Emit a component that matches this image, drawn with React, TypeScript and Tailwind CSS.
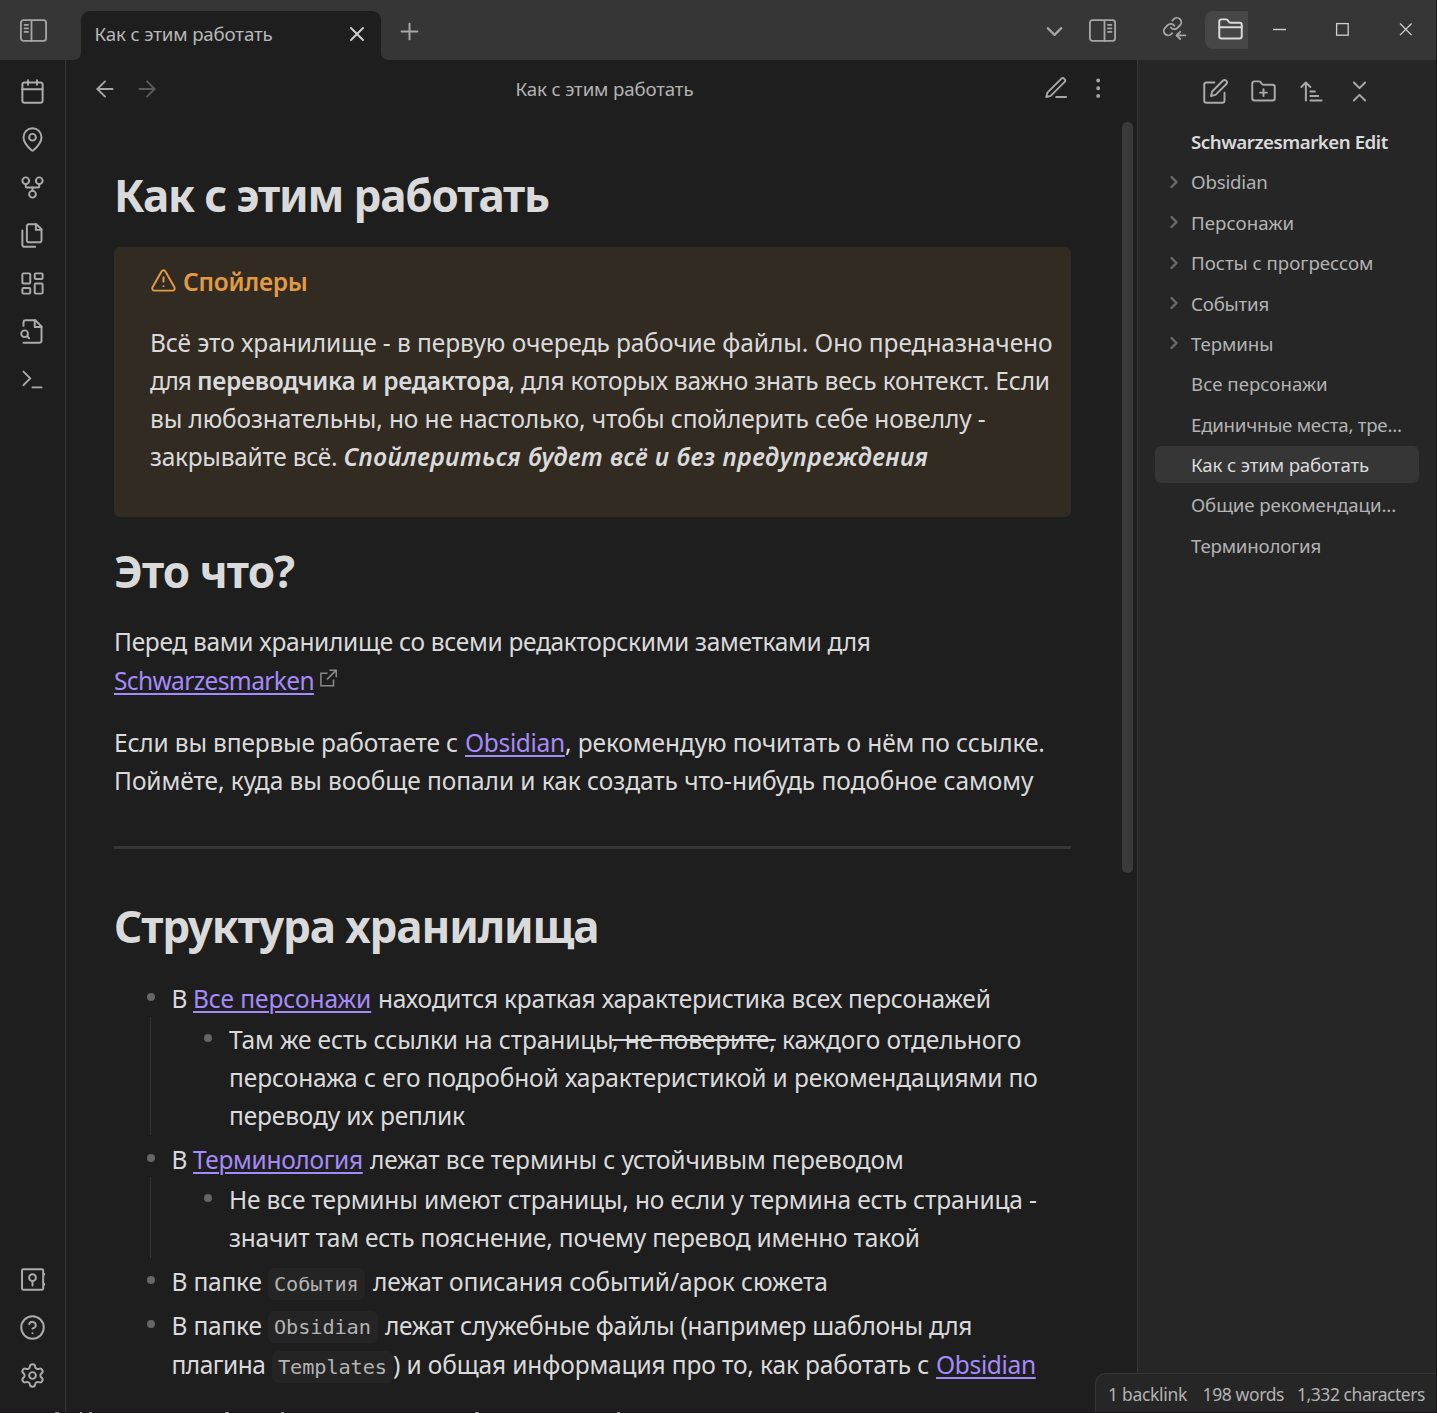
import React from "react";
import {
  ArrowLeft,
  ArrowRight,
  Calendar,
  ChevronDown,
  ChevronRight,
  CircleHelp,
  FolderClosed,
  FolderPlus,
  GitFork,
  LayoutDashboard,
  MapPin,
  Plus,
  Settings,
  X,
} from "lucide-react";

type Kids = { children: React.ReactNode };

function Glyph({ children, className = "size-[27px]" }: Kids & { className?: string }) {
  return (
    <svg
      viewBox="0 0 24 24"
      fill="none"
      stroke="currentColor"
      strokeWidth={1.75}
      strokeLinecap="round"
      strokeLinejoin="round"
      className={className}
    >
      {children}
    </svg>
  );
}

const FilesIcon = () => (
  <Glyph>
    <path d="M15.5 2H8.6c-.4 0-.8.2-1.1.5-.3.3-.5.7-.5 1.1v12.8c0 .4.2.8.5 1.1.3.3.7.5 1.1.5h9.8c.4 0 .8-.2 1.1-.5.3-.3.5-.7.5-1.1V6.5L15.5 2z" />
    <path d="M3 7.6v12.8c0 .4.2.8.5 1.1.3.3.7.5 1.1.5h9.8" />
    <path d="M15 2v5h5" />
  </Glyph>
);

const FileSearchIcon = () => (
  <Glyph>
    <path d="M4 22h14a2 2 0 0 0 2-2V7.5L14.5 2H6a2 2 0 0 0-2 2v3" />
    <path d="M14 2v6h6" />
    <path d="M5 17a3 3 0 1 0 0-6 3 3 0 0 0 0 6z" />
    <path d="m9 18-1.5-1.5" />
  </Glyph>
);

const TerminalIcon = () => (
  <Glyph>
    <path d="m4 17 6-6-6-6" />
    <path d="M12 19h8" />
  </Glyph>
);

const VaultIcon = () => (
  <Glyph>
    <rect x="2.7" y="2.8" width="18.8" height="18.4" rx="1.2" />
    <circle cx="12" cy="10.4" r="3" />
    <path d="M12 13.4v4" />
    <path d="M22.4 7v.6M22.4 16v.6" />
  </Glyph>
);

const LinksInIcon = () => (
  <svg
    viewBox="0 0 25 25"
    fill="none"
    stroke="currentColor"
    strokeWidth={1.9}
    strokeLinecap="round"
    strokeLinejoin="round"
    className="size-[25px]"
  >
    <path
      transform="scale(.88)"
      strokeWidth={2.1}
      d="M10 13a5 5 0 0 0 7.54.54l3-3a5 5 0 0 0-7.07-7.07l-1.72 1.71M14 11a5 5 0 0 0-7.54-.54l-3 3a5 5 0 0 0 7.07 7.07l1-1"
    />
    <path d="M23.3 19.4h-8.6M18.2 15.8l-3.7 3.6 3.7 3.6" />
  </svg>
);

function SidebarToggle({ side }: { side: "left" | "right" }) {
  const left = side === "left";
  return (
    <svg
      viewBox="0 0 28 24"
      fill="none"
      stroke="currentColor"
      strokeWidth={1.8}
      strokeLinecap="round"
      className="h-6 w-7"
    >
      <rect x="0.9" y="1.2" width="25.2" height="20.6" rx="2.6" />
      <path d={left ? "M11.500 2v20" : "M15.500 2v20"} />
      <path
        strokeWidth={1.8}
        d={left ? "M4.600 5.9h3.400M4.600 9.400h3.400M4.600 12.9h3.400" : "M19 5.9h3.400M19 9.400h3.400M19 12.9h3.400"}
      />
    </svg>
  );
}

function ExternalIcon() {
  return (
    <svg viewBox="0 0 18 18" fill="none" stroke="#8a8a8a" strokeWidth={1.5} className="mt-[7px] ml-[5px] size-[18px]">
      <path d="M8.5 4.2H1.9v12.600h12.6v-6.4M8 10.4l9-9M10.4 1.3h6.9v6.9" />
    </svg>
  );
}

function Slot({ children, className = "" }: Kids & { className?: string }) {
  return <div className={"flex h-12 shrink-0 items-center justify-center " + className}>{children}</div>;
}

function TitleBar() {
  return (
    <header className="flex h-[60px] shrink-0 bg-[#363636] text-[#a6a6a6]">
      <div className="flex w-[81px] pt-[19px] pl-[20px]">
        <SidebarToggle side="left" />
      </div>
      <div className="relative mt-[11px] flex w-[300px] items-center rounded-t-[9px] bg-[#1e1e1e] pb-[3px] pl-[13.5px] text-[#b8b8b8]">
        <span className="w-[250.5px] text-[18.7px] tracking-[-0.15px]">Как с этим работать</span>
        <X className="size-6 text-[#cfcfcf]" strokeWidth={1.9} />
        <span className="absolute bottom-0 -left-2 size-2 overflow-hidden">
          <span className="block size-2 rounded-br-[7px] shadow-[0_0_0_8px_#1e1e1e]" />
        </span>
        <span className="absolute -right-2 bottom-0 size-2 overflow-hidden">
          <span className="block size-2 rounded-bl-[7px] shadow-[0_0_0_8px_#1e1e1e]" />
        </span>
      </div>
      <div className="flex w-[57px] items-center justify-center pt-[3px] text-[#a6a6a6]">
        <Plus className="size-[27px]" strokeWidth={1.75} />
      </div>
      <div className="ml-auto flex w-[395px]">
        <div className="flex w-[27px] items-center pt-[3px]">
          <ChevronDown className="size-[27px] shrink-0" strokeWidth={1.9} />
        </div>
        <div className="ml-[21px] w-[27px] pt-[19px]">
          <SidebarToggle side="right" />
        </div>
        <div className="ml-[46px] w-[25px] pt-[16px]">
          <LinksInIcon />
        </div>
        <div className="mt-[11px] ml-[18px] flex h-[38px] w-[43px] items-center rounded-l-[8px] bg-[#464646] pb-px pl-[12px] text-[#dadada]">
          <FolderClosed className="size-[27px] shrink-0" strokeWidth={1.75} />
        </div>
        <div className="flex h-[59px] flex-1 items-center text-[#d0d0d0]">
          <svg viewBox="0 0 188 14" fill="none" stroke="currentColor" strokeWidth={1.3} className="-mt-px h-[14px] w-[188px] shrink-0">
            <path d="M25 7.5h13" strokeWidth={1.4} />
            <rect x="88.6" y="1.6" width="11.6" height="11.6" />
            <path d="m152 1.5 11.6 11.6M163.600 1.500 152 13.100" />
          </svg>
        </div>
      </div>
    </header>
  );
}

function Ribbon() {
  return (
    <nav className="flex w-[66px] shrink-0 flex-col border-r border-[#363636] pt-[7.500px] pb-[12.500px] text-[#ababab]">
      <Slot>
        <Calendar className="size-[27px]" strokeWidth={1.75} />
      </Slot>
      <Slot>
        <MapPin className="size-[27px]" strokeWidth={1.75} />
      </Slot>
      <Slot>
        <GitFork className="size-[27px]" strokeWidth={1.75} />
      </Slot>
      <Slot>
        <FilesIcon />
      </Slot>
      <Slot>
        <LayoutDashboard className="size-[27px]" strokeWidth={1.75} />
      </Slot>
      <Slot>
        <FileSearchIcon />
      </Slot>
      <Slot>
        <TerminalIcon />
      </Slot>
      <Slot className="mt-auto">
        <VaultIcon />
      </Slot>
      <Slot>
        <CircleHelp className="size-[27px]" strokeWidth={1.75} />
      </Slot>
      <Slot>
        <Settings className="size-[27px]" strokeWidth={1.75} />
      </Slot>
    </nav>
  );
}

function ViewHeader() {
  return (
    <div className="flex h-[57px] shrink-0 items-center pl-[26px] text-[#a6a6a6]">
      <ArrowLeft className="size-[26px]" strokeWidth={1.75} />
      <ArrowRight className="ml-[16px] size-[26px] text-[#5a5a5a]" strokeWidth={1.75} />
      <span className="ml-[355.400px] w-[529px] pt-px text-[18.7px] tracking-[-0.15px] text-[#b3b3b3]">
        Как с этим работать
      </span>
      <Glyph className="-ml-px size-[26.4px]">
        <path d="M12 20h9" />
        <path d="M16.5 3.5a2.12 2.12 0 0 1 3 3L7 19l-4 1 1-4Z" />
      </Glyph>
      <Glyph className="ml-[15.400px] size-[26.4px]">
        <circle cx="12" cy="5" r="0.9" />
        <circle cx="12" cy="12" r="0.9" />
        <circle cx="12" cy="19" r="0.9" />
      </Glyph>
    </div>
  );
}

function Line({ children, className = "" }: Kids & { className?: string }) {
  return <div className={"flex h-[38px] whitespace-nowrap " + className}>{children}</div>;
}

function Link({ children, className = "" }: Kids & { className?: string }) {
  return (
    <span className={"shrink-0 " + className}>
      <a className="text-[#a68af9] underline decoration-2 underline-offset-[3px]">{children}</a>
    </span>
  );
}

function Code({ children, className = "" }: Kids & { className?: string }) {
  return (
    <code
      className={
        "h-8 shrink-0 rounded-[6px] bg-[#242424] pl-[6px] font-['DejaVu_Sans_Mono',monospace] text-[20.27px] leading-8 text-[#b3b3b3] " +
        className
      }
    >
      {children}
    </code>
  );
}

function Bullet({ className = "w-[57.5px]" }: { className?: string }) {
  return (
    <span className={"flex shrink-0 pt-[13px] " + className}>
      <span className="ml-[33px] size-2 rounded-full bg-[#666666]" />
    </span>
  );
}

function Article() {
  return (
    <article className="w-[957px] text-[24.5px] leading-[38px] tracking-[-0.1px] text-[#dadada]">
      <h1 className="pt-[47px] text-[44px] leading-[62px] font-bold tracking-[-1.150px]">Как с этим работать</h1>

      <section className="mt-[21px] h-[270px] rounded-[6px] bg-[#322b22] pt-[16px] pl-[36px]">
        <Line className="text-[#e29a43]">
          <Glyph className="mt-[4px] mr-[6px] size-[27px] shrink-0">
            <path d="m21.73 18-8-14a2 2 0 0 0-3.48 0l-8 14A2 2 0 0 0 4 21h16a2 2 0 0 0 1.73-3Z" />
            <path d="M12 9v4M12 17h.01" />
          </Glyph>
          <span className="font-semibold tracking-[-0.25px]">Спойлеры</span>
        </Line>
        <div className="mt-[23px]">
          <Line className="tracking-[-0.08px]">Всё это хранилище - в первую очередь рабочие файлы. Оно предназначено</Line>
          <Line>
            <span className="w-[47px] tracking-[-1px]">для</span>
            <strong className="w-[311.500px] font-semibold tracking-[-0.3px]">переводчика и редактора</strong>
            <span className="tracking-[-0.2px]">, для которых важно знать весь контекст. Если</span>
          </Line>
          <Line className="tracking-[-0.13px]">вы любознательны, но не настолько, чтобы спойлерить себе новеллу -</Line>
          <Line>
            <span className="w-[193.500px] tracking-[-0.28px]">закрывайте всё.</span>
            <em className="font-semibold tracking-[0.46px]">Спойлериться будет всё и без предупреждения</em>
          </Line>
        </div>
      </section>

      <h1 className="mt-[23px] text-[44px] leading-[62px] font-bold tracking-[-0.93px]">Это что?</h1>
      <div className="mt-[21px]">
        <Line className="tracking-[-0.31px]">Перед вами хранилище со всеми редакторскими заметками для</Line>
        <Line className="mt-px">
          <Link className="w-[200px] tracking-[-0.63px]">Schwarzesmarken</Link>
          <ExternalIcon />
        </Line>
      </div>
      <div className="mt-[24px]">
        <Line>
          <span className="w-[351px] shrink-0 tracking-[-0.17px]">Если вы впервые работаете с</span>
          <Link className="w-[100px] tracking-[-0.35px]">Obsidian</Link>
          <span className="tracking-[-0.1px]">, рекомендую почитать о нём по ссылке.</span>
        </Line>
        <Line className="tracking-[-0.07px]">Поймёте, куда вы вообще попали и как создать что-нибудь подобное самому</Line>
      </div>
      <hr className="mt-[46px] h-[3px] border-0 bg-[#363636]" />

      <h1 className="mt-[46px] text-[44px] leading-[62px] font-bold tracking-[-1.120px]">Структура хранилища</h1>
      <ul className="mt-[23px]">
        <li>
          <Line>
            <Bullet />
            <span className="w-[21.5px]">В</span>
            <Link className="w-[185px] tracking-[-0.08px]">Все персонажи</Link>
            <span className="tracking-[-0.21px]">находится краткая характеристика всех персонажей</span>
          </Line>
          <div className="-mt-px ml-[36px] h-[118px] border-l border-[#363636] pt-1">
            <Line>
              <Bullet className="-ml-[16px] w-[94px] pl-[36px]" />
              <span className="w-[383px] shrink-0 tracking-[-0.13px]">Там же есть ссылки на страницы</span>
              <s className="w-[163px] shrink-0 tracking-[-0.15px]">, не поверите,</s>
              <span className="pl-[7px] tracking-[-0.08px]">каждого отдельного</span>
            </Line>
            <Line className="pl-[78px] tracking-[-0.1px]">
              персонажа с его подробной характеристикой и рекомендациями по
            </Line>
            <Line className="pl-[78px] tracking-[-0.150px]">переводу их реплик</Line>
          </div>
        </li>
        <li className="mt-[6px]">
          <Line>
            <Bullet />
            <span className="w-[21.5px]">В</span>
            <Link className="w-[177px] tracking-[-0.33px]">Терминология</Link>
            <span className="tracking-[-0.14px]">лежат все термины с устойчивым переводом</span>
          </Line>
          <div className="-mt-0.5 ml-[36px] h-[81px] border-l border-[#363636] pt-1">
            <Line>
              <Bullet className="-ml-[16px] w-[94px] pl-[36px]" />
              <span className="tracking-[-0.15px]">Не все термины имеют страницы, но если у термина есть страница -</span>
            </Line>
            <Line className="pl-[78px] tracking-[-0.21px]">значит там есть пояснение, почему перевод именно такой</Line>
          </div>
        </li>
        <li className="mt-[5px]">
          <Line>
            <Bullet />
            <span className="w-[96.5px] shrink-0 tracking-[-0.2px]">В папке</span>
            <Code className="mt-[5px] w-[97px]">События</Code>
            <span className="pl-[8px] tracking-[-0.1px]">лежат описания событий/арок сюжета</span>
          </Line>
        </li>
        <li className="mt-[6px]">
          <Line>
            <Bullet />
            <span className="w-[96.5px] shrink-0 tracking-[-0.2px]">В папке</span>
            <Code className="mt-1 w-[110px]">Obsidian</Code>
            <span className="pl-[7px] tracking-[-0.28px]">лежат служебные файлы (например шаблоны для</span>
          </Line>
          <Line className="mt-px pl-[57.5px]">
            <span className="w-[100.5px] shrink-0 tracking-[-0.5px]">плагина</span>
            <Code className="mt-[5px] w-[121px]">Templates</Code>
            <span className="w-[543px] shrink-0 tracking-[-0.13px]">) и общая информация про то, как работать с</span>
            <Link className="tracking-[-0.35px]">Obsidian</Link>
          </Line>
        </li>
      </ul>
    </article>
  );
}

function Note() {
  return (
    <main className="flex w-[1071px] shrink-0 flex-col">
      <ViewHeader />
      <div className="flex min-h-0 flex-1 justify-between overflow-hidden pr-[4px] pl-[48px]">
        <Article />
        <div className="mt-[5px] h-[751px] w-[11px] rounded-[5px] bg-[#3a3a3a]" />
      </div>
    </main>
  );
}

const folders = [
  { name: "Obsidian", tracking: "tracking-[-0.2px]" },
  { name: "Персонажи", tracking: "tracking-[0.05px]" },
  { name: "Посты с прогрессом", tracking: "tracking-[-0.03px]" },
  { name: "События", tracking: "tracking-[-0.2px]" },
  { name: "Термины", tracking: "tracking-[-0.1px]" },
];

const files = [
  { name: "Все персонажи", tracking: "tracking-[0px]" },
  { name: "Единичные места, тре...", tracking: "tracking-[-0.25px]" },
  { name: "Как с этим работать", tracking: "tracking-[-0.15px]", active: true },
  { name: "Общие рекомендаци...", tracking: "tracking-[-0.1px]" },
  { name: "Терминология", tracking: "tracking-[-0.2px]" },
];

function Explorer() {
  return (
    <aside className="flex flex-1 flex-col border-l border-[#363636] bg-[#262626]">
      <div className="flex pt-[7.500px] pl-[53.500px] text-[#a9a9a9]">
        <Slot className="w-12">
          <Glyph>
            <path d="M11 4H4a2 2 0 0 0-2 2v14a2 2 0 0 0 2 2h14a2 2 0 0 0 2-2v-7" />
            <path d="M18.5 2.5a2.12 2.12 0 0 1 3 3L12 15l-4 1 1-4Z" />
          </Glyph>
        </Slot>
        <Slot className="w-12">
          <FolderPlus className="size-[27px]" strokeWidth={1.75} />
        </Slot>
        <Slot className="w-12">
          <Glyph>
            <path d="m3 8 4-4 4 4M7 4v16M11 12h4M11 16h7M11 20h10" />
          </Glyph>
        </Slot>
        <Slot className="w-12">
          <Glyph>
            <path d="m7 20 5-5 5 5M7 4l5 5 5-5" />
          </Glyph>
        </Slot>
      </div>
      <div className="mt-[7.600px] flex w-[281px] flex-col gap-[3.370px] pl-[17px] text-[18.7px] leading-[37px] text-[#b3b3b3]">
        <div className="pl-[36px] font-semibold tracking-[-0.46px] text-[#dadada]">Schwarzesmarken Edit</div>
        {folders.map((f) => (
          <div key={f.name} className="flex h-[37px] items-center pl-[9px]">
            <ChevronRight className="mr-[7px] size-5 text-[#6a6a6a]" strokeWidth={2.900} />
            <span className={f.tracking}>{f.name}</span>
          </div>
        ))}
        {files.map((f) => (
          <div
            key={f.name}
            className={
              "h-[37px] rounded-[6px] pl-[36px] whitespace-nowrap " +
              f.tracking +
              (f.active ? " bg-[#363636] text-[#dadada]" : "")
            }
          >
            {f.name}
          </div>
        ))}
      </div>
    </aside>
  );
}

function StatusBar() {
  return (
    <footer className="absolute right-0 bottom-px flex h-[39px] w-[341px] rounded-tl-[11px] border-t border-l border-[#363636] bg-[#262626] pl-[12px] text-[17.5px] leading-[40px] whitespace-nowrap text-[#b3b3b3]">
      <span className="w-[94.500px] tracking-[-0.3px]">1 backlink</span>
      <span className="w-[94.500px] tracking-[-0.38px]">198 words</span>
      <span className="tracking-[-0.45px]">1,332 characters</span>
    </footer>
  );
}

function WindowEdge() {
  return (
    <div className="h-px shrink-0 bg-[#1a171a]">
      <svg viewBox="0 0 700 1" className="block h-px w-[700px]" stroke="#8c8c8c" strokeWidth={1}>
        <path d="M55 .5h4M80 .5h2M89 .5h3M225 .5h4M281 .5h3M475 .5h4M617 .5h3" />
      </svg>
    </div>
  );
}

export default function App() {
  return (
    <div className="relative flex h-[1413px] w-[1437px] flex-col overflow-hidden border-r border-[#1a171a] bg-[#1e1e1e] font-['Noto_Sans',sans-serif]">
      <TitleBar />
      <div className="flex min-h-0 flex-1">
        <Ribbon />
        <Note />
        <Explorer />
      </div>
      <WindowEdge />
      <StatusBar />
    </div>
  );
}
